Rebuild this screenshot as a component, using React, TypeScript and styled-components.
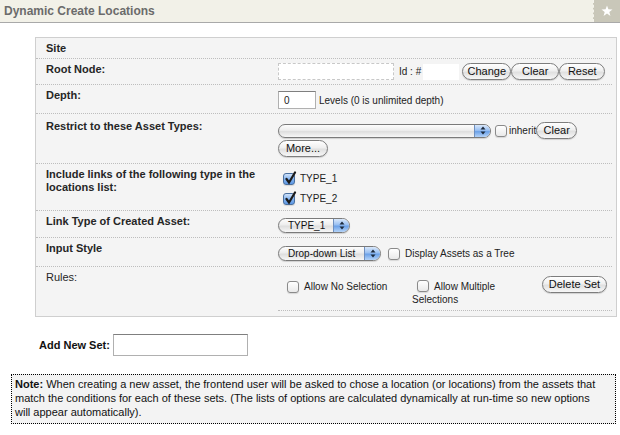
import React from 'react';
import styled, { createGlobalStyle } from 'styled-components';

const GlobalStyle = createGlobalStyle`
  body {
    margin: 0;
    background: #fff;
    font-family: "Liberation Sans", Arial, sans-serif;
    color: #222;
  }
`;

const Page = styled.div`
  width: 620px;
`;

const Header = styled.div`
  display: flex;
  align-items: center;
  height: 22px;
  background: #f2f1e8;
  border-bottom: 1px solid #a9a9a9;
`;

const Title = styled.div`
  flex: 1;
  padding-left: 4px;
  font-size: 12px;
  font-weight: bold;
  color: #6b6b6b;
`;

const StarBox = styled.div`
  width: 26px;
  height: 22px;
  display: flex;
  align-items: center;
  justify-content: center;
  background: #c9c7b9;
  border-left: 1px dashed #f4f3ec;
`;

const Box = styled.div`
  margin: 14px 0 0 35px;
  width: 582px;
  box-sizing: border-box;
  border: 1px solid #cfcfcf;
  background: #f4f4f4;
  padding-right: 4px;
`;

const Row = styled.div<{ $h: number; $last?: boolean }>`
  display: grid;
  grid-template-columns: 242px 1fr;
  height: ${p => p.$h}px;
  box-sizing: border-box;
  border-bottom: ${p => (p.$last ? 'none' : '1px dotted #bdbdbd')};
`;

const Label = styled.div<{ $plain?: boolean; $pt?: number }>`
  padding: ${p => p.$pt ?? 4}px 0 0 10px;
  font-size: 11px;
  line-height: 13px;
  font-weight: ${p => (p.$plain ? 'normal' : 'bold')};
  color: #262626;
`;

const Value = styled.div<{ $pt: number }>`
  padding-top: ${p => p.$pt}px;
  font-size: 10px;
  line-height: 13px;
  color: #222;
`;

const Line = styled.div<{ $gap?: number }>`
  display: flex;
  align-items: center;
  margin-bottom: ${p => p.$gap ?? 0}px;
`;

const Text = styled.span<{ $ml?: number }>`
  margin-left: ${p => p.$ml ?? 0}px;
  font-size: 10px;
  color: #222;
  white-space: nowrap;
`;

const MacButton = styled.button<{ $w: number }>`
  height: 17px;
  width: ${p => p.$w}px;
  padding: 0;
  margin: 0;
  border: 1px solid #7d7d7d;
  border-radius: 9px;
  background: linear-gradient(#ffffff, #efefef 45%, #e0e0e0 55%, #f7f7f7);
  box-shadow: 0 1px 1px rgba(0, 0, 0, 0.15);
  font-family: "Liberation Sans", Arial, sans-serif;
  font-size: 11px;
  line-height: 15px;
  color: #111;
  white-space: nowrap;
`;

const DashedField = styled.div`
  width: 114px;
  height: 15px;
  border: 1px dashed #c8c8c8;
  background: #fff;
`;

const PlainField = styled.div`
  width: 36px;
  height: 16px;
  background: #fff;
  margin: 0 3px 0 2px;
`;

const TextField = styled.div<{ $w: number; $h: number }>`
  width: ${p => p.$w}px;
  height: ${p => p.$h}px;
  box-sizing: border-box;
  background: #fff;
  border: 1px solid #b0b0b0;
  border-top-color: #7f7f7f;
  padding: 2px 0 0 5px;
  font-size: 10px;
  line-height: 13px;
`;

const SelectBox = styled.div<{ $w: number; $h: number }>`
  display: flex;
  width: ${p => p.$w}px;
  height: ${p => p.$h}px;
  box-sizing: border-box;
  border: 1px solid #7a7a7a;
  border-radius: ${p => Math.round(p.$h / 2)}px;
  overflow: hidden;
  background: linear-gradient(#fdfdfd, #ededed 45%, #dedede 55%, #f7f7f7);
  box-shadow: 0 1px 1px rgba(0, 0, 0, 0.15);
`;

const SelectText = styled.span`
  flex: 1;
  padding-left: 9px;
  font-size: 10px;
  line-height: 13px;
  color: #111;
  white-space: nowrap;
`;

const SelectArrow = styled.span`
  width: 15px;
  display: flex;
  align-items: center;
  justify-content: center;
  border-left: 1px solid #6e8fbf;
  background: linear-gradient(#d9e8fb, #98bff2 45%, #6ba1e8 55%, #b4d3f8);
`;

const Check = styled.span<{ $on?: boolean; $ml?: number }>`
  position: relative;
  display: inline-block;
  flex: none;
  width: 12px;
  height: 12px;
  box-sizing: border-box;
  margin-left: ${p => p.$ml ?? 0}px;
  border: 1px solid ${p => (p.$on ? '#4a6f9e' : '#8a8a8a')};
  border-radius: 3px;
  background: ${p =>
    p.$on
      ? 'linear-gradient(#cfe2fa, #7fb0ee 55%, #5e98e4)'
      : 'linear-gradient(#ffffff, #e9e9e9)'};
  box-shadow: 0 1px 1px rgba(0, 0, 0, 0.12);
  vertical-align: -2px;
`;

const Tick = styled.svg`
  position: absolute;
  left: 0;
  top: -3px;
`;

const RulesGrid = styled.div`
  display: grid;
  grid-template-columns: 134px 126px 1fr;
  height: 43px;
  border-bottom: 1px dotted #bdbdbd;
`;

const RuleCell = styled.div<{ $pt: number; $pl?: number }>`
  padding: ${p => p.$pt}px 0 0 ${p => p.$pl ?? 0}px;
  font-size: 10px;
  line-height: 13px;
  color: #222;
`;

const AddRow = styled.div`
  display: flex;
  align-items: center;
  margin: 17px 0 0 39px;
`;

const AddLabel = styled.span`
  font-size: 11px;
  font-weight: bold;
  color: #111;
  margin-right: 3px;
`;

const Note = styled.div`
  margin: 18px 4px 0 11px;
  border: 1px dotted #000;
  background: #f3f3f3;
  padding: 2px 16px 4px 3px;
  font-size: 11px;
  line-height: 14px;
  color: #111;
`;

const Arrows = () => (
  <svg width="6" height="9" viewBox="0 0 6 9">
    <path d="M3 0.5 L5.5 3.5 H0.5 Z" fill="#1d2a3c" />
    <path d="M3 8.5 L5.5 5.5 H0.5 Z" fill="#1d2a3c" />
  </svg>
);

const Select: React.FC<{ w: number; h: number; text?: string }> = ({ w, h, text }) => (
  <SelectBox $w={w} $h={h}>
    <SelectText>{text}</SelectText>
    <SelectArrow>
      <Arrows />
    </SelectArrow>
  </SelectBox>
);

const Checkbox: React.FC<{ on?: boolean; ml?: number }> = ({ on, ml }) => (
  <Check $on={on} $ml={ml}>
    {on && (
      <Tick width="13" height="14" viewBox="0 0 13 14">
        <path d="M2.5 8 L5 11.5 L11 1.5" stroke="#1a1a1a" strokeWidth="2.2" fill="none" strokeLinecap="round" />
      </Tick>
    )}
  </Check>
);

const App: React.FC = () => {
  return (
    <Page>
      <GlobalStyle />
      <Header>
        <Title>Dynamic Create Locations</Title>
        <StarBox>
          <svg width="12" height="12" viewBox="0 0 12 12">
            <path
              d="M6 0.5 L7.4 4.3 L11.5 4.4 L8.3 6.9 L9.4 10.9 L6 8.6 L2.6 10.9 L3.7 6.9 L0.5 4.4 L4.6 4.3 Z"
              fill="#fff"
            />
          </svg>
        </StarBox>
      </Header>

      <Box>
        <Row $h={21}>
          <Label>Site</Label>
          <Value $pt={0} />
        </Row>

        <Row $h={26}>
          <Label>Root Node:</Label>
          <Value $pt={4}>
            <Line>
              <DashedField />
              <Text $ml={5}>Id : #</Text>
              <PlainField />
              <MacButton $w={49}>Change</MacButton>
              <MacButton $w={48}>Clear</MacButton>
              <MacButton $w={46}>Reset</MacButton>
            </Line>
          </Value>
        </Row>

        <Row $h={29}>
          <Label>Depth:</Label>
          <Value $pt={6}>
            <Line>
              <TextField $w={38} $h={18}>0</TextField>
              <Text $ml={3}>Levels (0 is unlimited depth)</Text>
            </Line>
          </Value>
        </Row>

        <Row $h={50}>
          <Label $pt={6}>Restrict to these Asset Types:</Label>
          <Value $pt={8}>
            <Line $gap={1}>
              <Select w={213} h={14} />
              <Checkbox ml={4} />
              <Text $ml={2}>inherit</Text>
              <MacButton $w={41}>Clear</MacButton>
            </Line>
            <Line>
              <MacButton $w={50}>More...</MacButton>
            </Line>
          </Value>
        </Row>

        <Row $h={47}>
          <Label>
            Include links of the following type in the
            <br />
            locations list:
          </Label>
          <Value $pt={8}>
            <Line $gap={7}>
              <Checkbox on ml={5} />
              <Text $ml={5}>TYPE_1</Text>
            </Line>
            <Line>
              <Checkbox on ml={5} />
              <Text $ml={5}>TYPE_2</Text>
            </Line>
          </Value>
        </Row>

        <Row $h={27}>
          <Label>Link Type of Created Asset:</Label>
          <Value $pt={7}>
            <Line>
              <Select w={72} h={15} text="TYPE_1" />
            </Line>
          </Value>
        </Row>

        <Row $h={29}>
          <Label>Input Style</Label>
          <Value $pt={8}>
            <Line>
              <Select w={103} h={15} text="Drop-down List" />
              <Checkbox ml={7} />
              <Text $ml={5}>Display Assets as a Tree</Text>
            </Line>
          </Value>
        </Row>

        <Row $h={49} $last>
          <Label $plain>Rules:</Label>
          <Value $pt={0}>
            <RulesGrid>
              <RuleCell $pt={13} $pl={9}>
                <Line>
                  <Checkbox />
                  <Text $ml={5}>Allow No Selection</Text>
                </Line>
              </RuleCell>
              <RuleCell $pt={13}>
                <Checkbox ml={5} />&nbsp; Allow Multiple Selections
              </RuleCell>
              <RuleCell $pt={9} $pl={4}>
                <MacButton $w={65}>Delete Set</MacButton>
              </RuleCell>
            </RulesGrid>
          </Value>
        </Row>
      </Box>

      <AddRow>
        <AddLabel>Add New Set:</AddLabel>
        <TextField $w={135} $h={22} />
      </AddRow>

      <Note>
        <b>Note:</b> When creating a new asset, the frontend user will be asked to chose a location (or
        locations) from the assets that match the conditions for each of these sets. (The lists of options
        are calculated dynamically at run-time so new options will appear automatically).
      </Note>
    </Page>
  );
};

export default App;
